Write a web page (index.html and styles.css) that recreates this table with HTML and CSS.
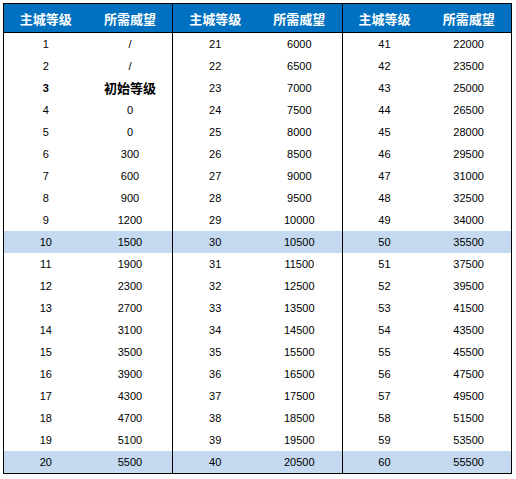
FILE: index.html
```html
<!DOCTYPE html>
<html lang="zh">
<head>
<meta charset="utf-8">
<link rel="stylesheet" href="styles.css">
</head>
<body>
<table class="grid">
<colgroup>
<col class="c-lv"><col class="c-val"><col class="c-lv"><col class="c-val"><col class="c-lv"><col class="c-val">
</colgroup>
<thead>
<tr><th>主城等级</th><th class="end">所需威望</th><th>主城等级</th><th class="end">所需威望</th><th>主城等级</th><th>所需威望</th></tr>
</thead>
<tbody>
<tr><td>1</td><td class="end">/</td><td>21</td><td class="end">6000</td><td>41</td><td>22000</td></tr>
<tr><td>2</td><td class="end">/</td><td>22</td><td class="end">6500</td><td>42</td><td>23500</td></tr>
<tr><td class="b">3</td><td class="end b cjk">初始等级</td><td>23</td><td class="end">7000</td><td>43</td><td>25000</td></tr>
<tr><td>4</td><td class="end">0</td><td>24</td><td class="end">7500</td><td>44</td><td>26500</td></tr>
<tr><td>5</td><td class="end">0</td><td>25</td><td class="end">8000</td><td>45</td><td>28000</td></tr>
<tr><td>6</td><td class="end">300</td><td>26</td><td class="end">8500</td><td>46</td><td>29500</td></tr>
<tr><td>7</td><td class="end">600</td><td>27</td><td class="end">9000</td><td>47</td><td>31000</td></tr>
<tr><td>8</td><td class="end">900</td><td>28</td><td class="end">9500</td><td>48</td><td>32500</td></tr>
<tr><td>9</td><td class="end">1200</td><td>29</td><td class="end">10000</td><td>49</td><td>34000</td></tr>
<tr class="hl"><td>10</td><td class="end">1500</td><td>30</td><td class="end">10500</td><td>50</td><td>35500</td></tr>
<tr><td>11</td><td class="end">1900</td><td>31</td><td class="end">11500</td><td>51</td><td>37500</td></tr>
<tr><td>12</td><td class="end">2300</td><td>32</td><td class="end">12500</td><td>52</td><td>39500</td></tr>
<tr><td>13</td><td class="end">2700</td><td>33</td><td class="end">13500</td><td>53</td><td>41500</td></tr>
<tr><td>14</td><td class="end">3100</td><td>34</td><td class="end">14500</td><td>54</td><td>43500</td></tr>
<tr><td>15</td><td class="end">3500</td><td>35</td><td class="end">15500</td><td>55</td><td>45500</td></tr>
<tr><td>16</td><td class="end">3900</td><td>36</td><td class="end">16500</td><td>56</td><td>47500</td></tr>
<tr><td>17</td><td class="end">4300</td><td>37</td><td class="end">17500</td><td>57</td><td>49500</td></tr>
<tr><td>18</td><td class="end">4700</td><td>38</td><td class="end">18500</td><td>58</td><td>51500</td></tr>
<tr><td>19</td><td class="end">5100</td><td>39</td><td class="end">19500</td><td>59</td><td>53500</td></tr>
<tr class="hl"><td>20</td><td class="end">5500</td><td>40</td><td class="end">20500</td><td>60</td><td>55500</td></tr>
</tbody>
</table>
</body>
</html>
```
FILE: styles.css
```css
html, body {
  margin: 0;
  padding: 0;
  background: #ffffff;
}
body {
  padding: 3px 0 0 3px;
  font-family: "Liberation Sans", "Noto Sans CJK SC", sans-serif;
  font-size: 11px;
  color: #000000;
}
.grid {
  border-collapse: collapse;
  border: 1px solid #000000;
  table-layout: fixed;
  width: 509px;
}
.c-lv { width: 84px; }
.c-val { width: 85px; }
.grid th {
  background: #0070c0;
  color: #ffffff;
  height: 28px;
  padding: 0;
  font-family: "Noto Sans CJK SC", sans-serif;
  font-size: 13px;
  font-weight: bold;
  border-bottom: 1px solid #000000;
  text-align: center;
}
.grid td {
  height: 22px;
  padding: 0;
  text-align: center;
  line-height: 22px;
}
.grid .end {
  border-right: 1px solid #000000;
}
.grid tr.hl td {
  background: #c5d9f1;
}
.grid .b {
  font-weight: bold;
}
.grid .cjk {
  font-family: "Noto Sans CJK SC", sans-serif;
  font-size: 13px;
}
```
